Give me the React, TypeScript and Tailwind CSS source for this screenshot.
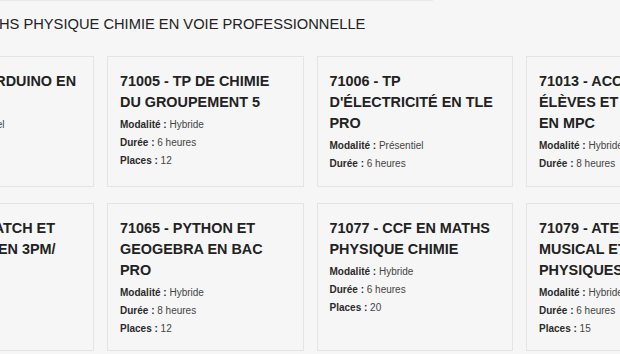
import React from 'react';

type Formation = {
  title: string;
  modalite: string;
  duree: string;
  places?: number;
};

const formations: Formation[] = [
  { title: '71002 - TP ARDUINO EN SECONDE', modalite: 'Présentiel', duree: '6 heures', places: 12 },
  { title: '71005 - TP DE CHIMIE DU GROUPEMENT 5', modalite: 'Hybride', duree: '6 heures', places: 12 },
  { title: "71006 - TP D'ÉLECTRICITÉ EN TLE PRO", modalite: 'Présentiel', duree: '6 heures' },
  { title: '71013 - ACCUEIL DES ÉLÈVES ET HANDICAP EN MPC', modalite: 'Hybride', duree: '8 heures' },
  { title: '71064 - SCRATCH ET GEOGEBRA EN 3PM/ CAP', modalite: 'Hybride', duree: '6 heures', places: 12 },
  { title: '71065 - PYTHON ET GEOGEBRA EN BAC PRO', modalite: 'Hybride', duree: '8 heures', places: 12 },
  { title: '71077 - CCF EN MATHS PHYSIQUE CHIMIE', modalite: 'Hybride', duree: '6 heures', places: 20 },
  { title: '71079 - ATELIER MUSICAL ET ONDES PHYSIQUES', modalite: 'Hybride', duree: '6 heures', places: 15 },
];

function Detail({ label, value }: { label: string; value: string | number }) {
  return (
    <div className="text-[10px] leading-[18px] text-[#444]">
      <span className="font-bold text-[#2a2a2a]">{label} :</span> {value}
    </div>
  );
}

function FormationCard({ formation }: { formation: Formation }) {
  return (
    <div className="border border-[#e4e4e4] bg-[#f6f6f6] px-[12px] pt-[14px]">
      <h3 className="text-[14.4px] font-bold leading-[21px] text-[#222]">{formation.title}</h3>
      <div className="mt-[3px]">
        <Detail label="Modalité" value={formation.modalite} />
        <Detail label="Durée" value={formation.duree} />
        {formation.places !== undefined && <Detail label="Places" value={formation.places} />}
      </div>
    </div>
  );
}

export default function App() {
  return (
    <div
      className="h-[354px] w-[620px] overflow-hidden bg-[#f6f6f6]"
      style={{ fontFamily: '"Liberation Sans", Arial, sans-serif' }}
    >
      <div className="h-px w-[433px] bg-[#e8e8e8]" />
      <h2 className="ml-[-31px] mt-[14px] whitespace-nowrap text-[14.7px] leading-[18px] text-[#222]">
        MATHS PHYSIQUE CHIMIE EN VOIE PROFESSIONNELLE
      </h2>
      <div className="ml-[-102.5px] mt-[23px] grid grid-cols-[repeat(4,196.5px)] grid-rows-[131px_148px] gap-x-[13px] gap-y-[16px]">
        {formations.map((f) => (
          <FormationCard key={f.title} formation={f} />
        ))}
      </div>
    </div>
  );
}
